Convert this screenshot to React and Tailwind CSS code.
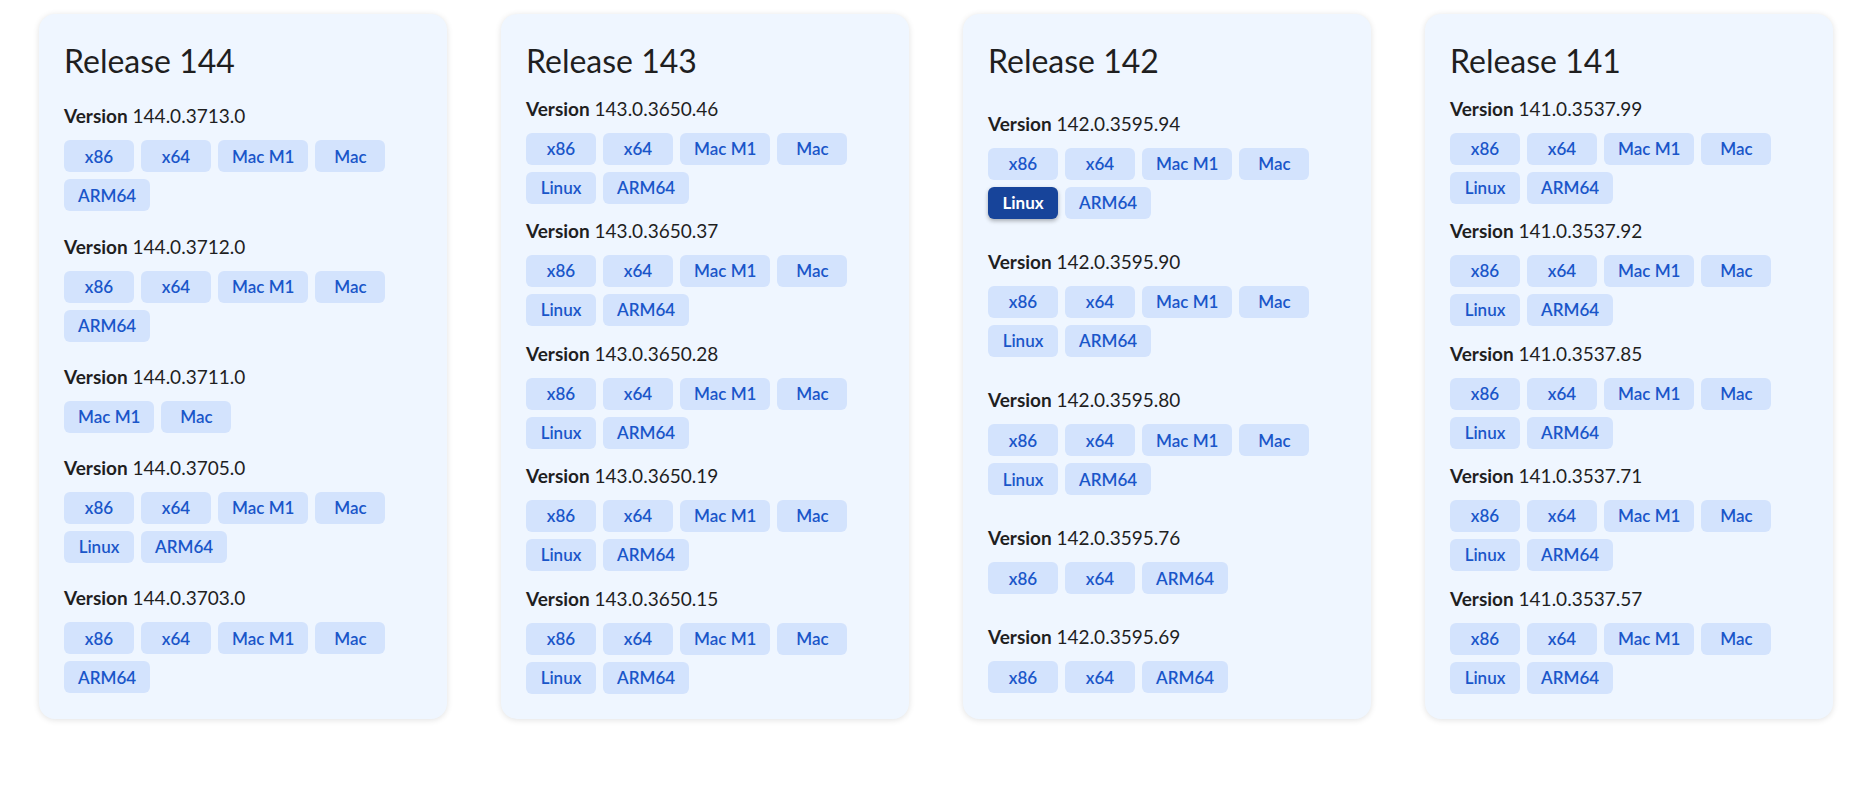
import { useState } from 'react';

const ALL = ['x86', 'x64', 'Mac M1', 'Mac', 'Linux', 'ARM64'];
const NO_LINUX = ['x86', 'x64', 'Mac M1', 'Mac', 'ARM64'];

const releases = [
  {
    name: 'Release 144',
    versions: [
      { v: '144.0.3713.0', builds: NO_LINUX },
      { v: '144.0.3712.0', builds: NO_LINUX },
      { v: '144.0.3711.0', builds: ['Mac M1', 'Mac'] },
      { v: '144.0.3705.0', builds: ALL },
      { v: '144.0.3703.0', builds: NO_LINUX },
    ],
  },
  {
    name: 'Release 143',
    versions: ['46', '37', '28', '19', '15'].map((b) => ({ v: `143.0.3650.${b}`, builds: ALL })),
  },
  {
    name: 'Release 142',
    versions: [
      { v: '142.0.3595.94', builds: ALL },
      { v: '142.0.3595.90', builds: ALL },
      { v: '142.0.3595.80', builds: ALL },
      { v: '142.0.3595.76', builds: ['x86', 'x64', 'ARM64'] },
      { v: '142.0.3595.69', builds: ['x86', 'x64', 'ARM64'] },
    ],
  },
  {
    name: 'Release 141',
    versions: ['99', '92', '85', '71', '57'].map((b) => ({ v: `141.0.3537.${b}`, builds: ALL })),
  },
];

function BuildButton({ label, active, onClick }) {
  return (
    <button
      onClick={onClick}
      className={
        active
          ? 'h-8 min-w-[70px] px-[14px] rounded-md bg-[#17449a] text-white font-bold text-[17px] shadow-[0_2px_4px_rgba(0,0,0,0.3)]'
          : 'h-8 min-w-[70px] px-[14px] rounded-md bg-[#d3e3fd] text-[#1a56c9] font-semibold text-[17px] hover:bg-[#c2d7fb]'
      }
    >
      {label}
    </button>
  );
}

export default function App() {
  const [selected, setSelected] = useState('142.0.3595.94/Linux');

  return (
    <div className="min-h-[801px] bg-white pl-[39px] pt-[14px] font-['Lato','Noto_Sans',sans-serif] text-[#1f1f1f]">
      <div className="grid grid-cols-[repeat(4,408px)] gap-x-[54px]">
        {releases.map((r) => (
          <section
            key={r.name}
            className="flex flex-col justify-between gap-[14.5px] rounded-2xl bg-[#eff6ff] px-[25px] pt-[27px] pb-[25px] shadow-[0_1px_6px_rgba(0,0,0,0.12)]"
          >
            <h2 className="text-[32px] leading-[40px] font-normal">{r.name}</h2>
            {r.versions.map((ver) => (
              <div key={ver.v}>
                <p className="text-[19px] leading-[26px] mb-[11px]">
                  <span className="font-bold">Version</span> {ver.v}
                </p>
                <div className="flex flex-wrap gap-x-[7px] gap-y-[7px]">
                  {ver.builds.map((b) => {
                    const id = `${ver.v}/${b}`;
                    return (
                      <BuildButton
                        key={b}
                        label={b}
                        active={selected === id}
                        onClick={() => setSelected(id)}
                      />
                    );
                  })}
                </div>
              </div>
            ))}
          </section>
        ))}
      </div>
    </div>
  );
}
